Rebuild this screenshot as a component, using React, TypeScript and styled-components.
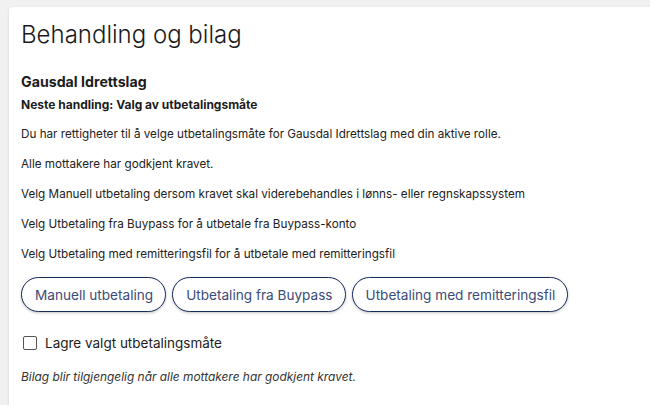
import React from "react";
import styled, { createGlobalStyle } from "styled-components";

const Global = createGlobalStyle`
  html, body { margin: 0; padding: 0; background: #f2f1f1; }
  body { font-family: Inter, "Noto Sans", sans-serif; color: #1c1c1c; }
  * { box-sizing: border-box; }
`;

const Page = styled.div`
  padding: 7px 0 0 9px;
  width: 650px;
  height: 405px;
  overflow: hidden;
`;

const Card = styled.section`
  background: #fff;
  border-radius: 4px;
  box-shadow: 0 1px 3px rgba(0, 0, 0, 0.12);
  width: 700px;
  min-height: 420px;
  padding: 12px 12px 20px 12px;
  display: flex;
  flex-direction: column;
`;

const Title = styled.h1`
  margin: 0;
  font-size: 24px;
  font-weight: 300;
  line-height: 32px;
  color: #1a1a1a;
`;

const OrgName = styled.h2`
  margin: 22px 0 0 0;
  font-size: 14.2px;
  font-weight: 700;
  line-height: 18px;
`;

const NextAction = styled.h3`
  margin: 6px 0 0 0;
  font-size: 12px;
  font-weight: 700;
  line-height: 15px;
`;

const Text = styled.p`
  margin: 15px 0 0 0;
  font-size: 11.7px;
  line-height: 15px;
  color: #222;
`;

const Buttons = styled.div`
  display: flex;
  gap: 6px;
  margin-top: 15px;
`;

const PillButton = styled.button`
  font-family: Inter, "Noto Sans", sans-serif;
  font-size: 13.6px;
  font-weight: 400;
  color: #3b4a78;
  background: #fff;
  border: 1px solid #172b5c;
  border-radius: 18px;
  height: 35px;
  padding: 0 12px 0 13px;
  box-shadow: 0 1px 3px rgba(0, 0, 0, 0.25);
  cursor: pointer;
`;

const CheckRow = styled.label`
  display: flex;
  align-items: center;
  gap: 8px;
  margin-top: 23px;
  margin-left: 2px;
  font-size: 13.5px;
  line-height: 16px;
  color: #222;
`;

const Box = styled.span`
  width: 14px;
  height: 14px;
  border: 1px solid #555;
  border-radius: 2px;
  background: #fff;
`;

const Note = styled.p`
  margin: 18px 0 0 0;
  font-size: 11.9px;
  font-style: italic;
  line-height: 15px;
  color: #333;
`;

export default function App() {
  return (
    <>
      <Global />
      <Page>
        <Card>
          <Title>Behandling og bilag</Title>
          <OrgName>Gausdal Idrettslag</OrgName>
          <NextAction>Neste handling: Valg av utbetalingsmåte</NextAction>
          <Text>Du har rettigheter til å velge utbetalingsmåte for Gausdal Idrettslag med din aktive rolle.</Text>
          <Text>Alle mottakere har godkjent kravet.</Text>
          <Text>Velg Manuell utbetaling dersom kravet skal viderebehandles i lønns- eller regnskapssystem</Text>
          <Text>Velg Utbetaling fra Buypass for å utbetale fra Buypass-konto</Text>
          <Text>Velg Utbetaling med remitteringsfil for å utbetale med remitteringsfil</Text>
          <Buttons>
            <PillButton>Manuell utbetaling</PillButton>
            <PillButton>Utbetaling fra Buypass</PillButton>
            <PillButton>Utbetaling med remitteringsfil</PillButton>
          </Buttons>
          <CheckRow>
            <Box />
            Lagre valgt utbetalingsmåte
          </CheckRow>
          <Note>Bilag blir tilgjengelig når alle mottakere har godkjent kravet.</Note>
        </Card>
      </Page>
    </>
  );
}
